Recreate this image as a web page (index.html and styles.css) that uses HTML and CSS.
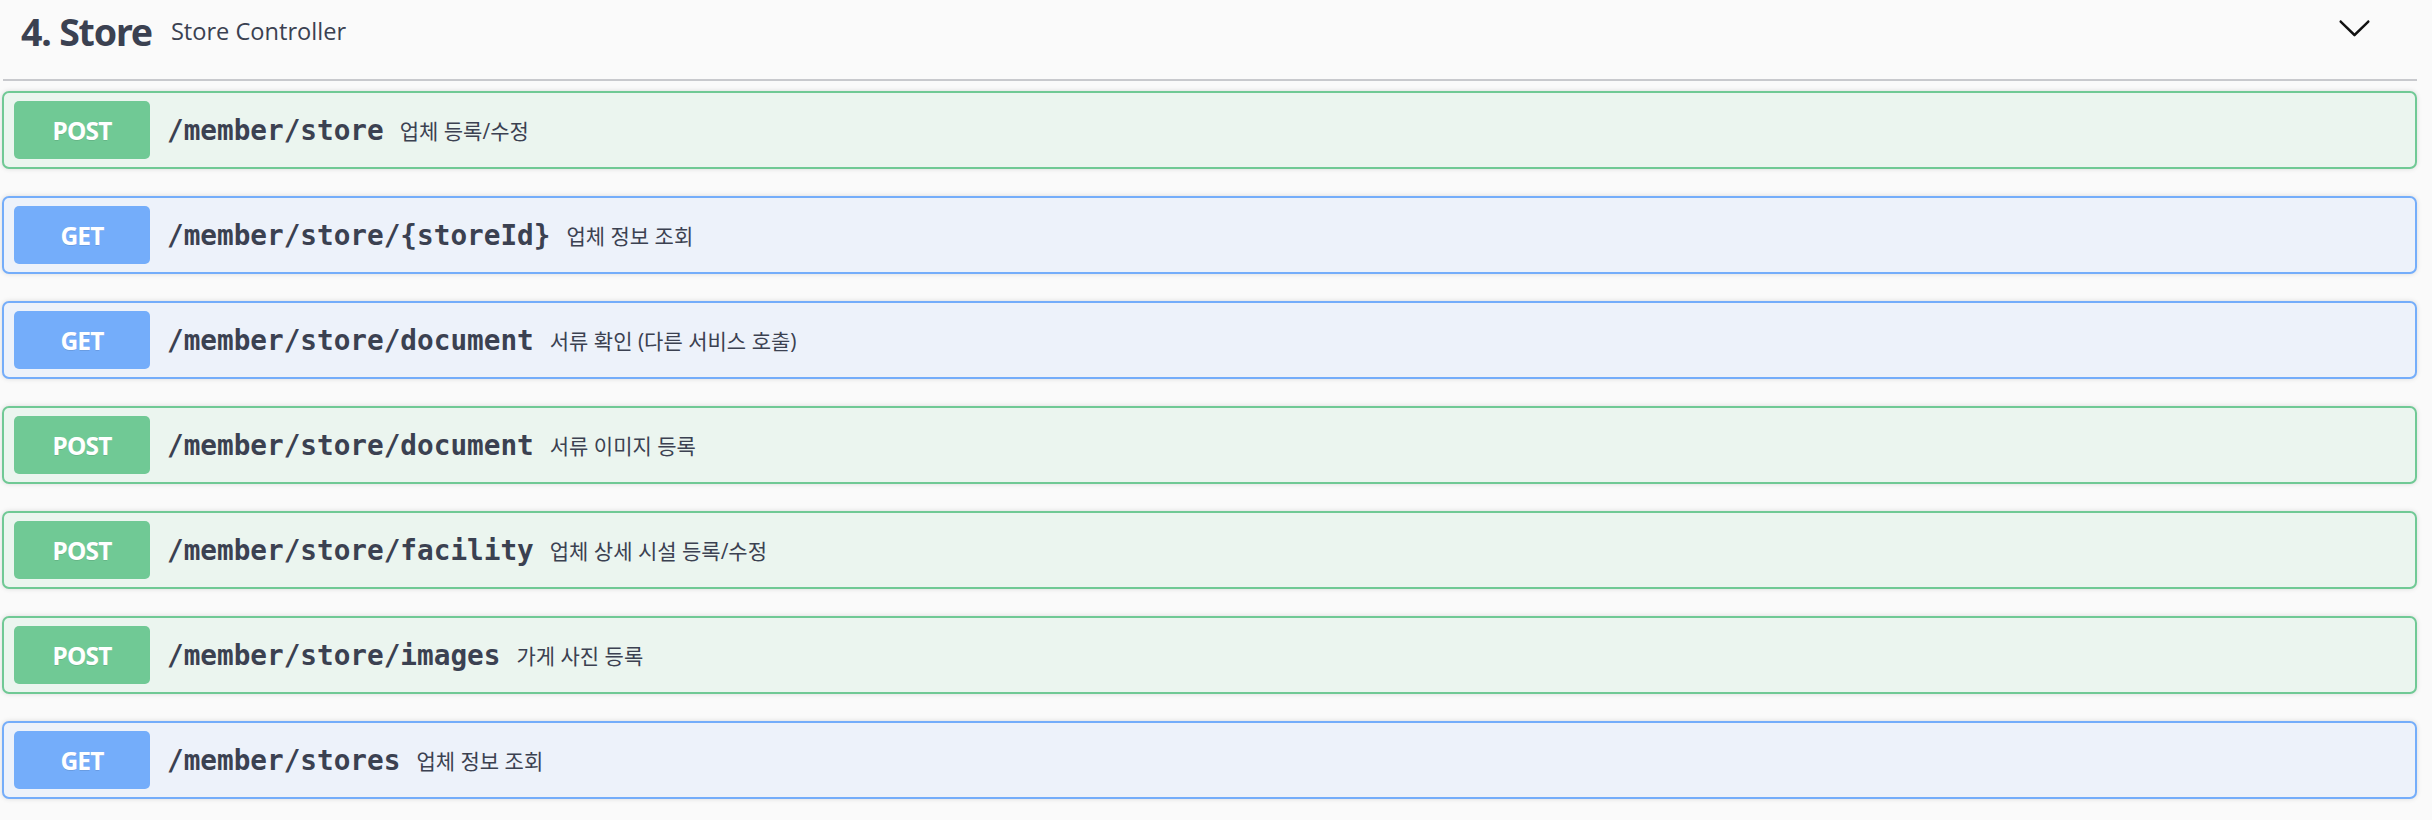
FILE: index.html
```html
<!DOCTYPE html>
<html lang="ko">
<head>
<meta charset="utf-8">
<title>Store Controller</title>
<link rel="stylesheet" href="styles.css">
</head>
<body>
<div class="wrapper">
  <div class="tag">
    <h3 class="tag-title">4. Store</h3>
    <span class="tag-desc">Store Controller</span>
    <svg class="arrow" viewBox="0 0 20 20" width="35" height="35" aria-hidden="true"><path d="M17.418 6.109c.272-.268.709-.268.979 0s.271.701 0 .969l-7.908 7.830c-.27.268-.707.268-.979 0l-7.908-7.83c-.27-.268-.27-.701 0-.969.271-.268.709-.268.979 0L10 13.25l7.418-7.141z"/></svg>
  </div>
  <div class="ops">
    <div class="op post"><span class="method">POST</span><span class="path">/member/store</span><span class="desc">업체 등록/수정</span></div>
    <div class="op get"><span class="method">GET</span><span class="path">/member/store/{storeId}</span><span class="desc">업체 정보 조회</span></div>
    <div class="op get"><span class="method">GET</span><span class="path">/member/store/document</span><span class="desc">서류 확인 (다른 서비스 호출)</span></div>
    <div class="op post"><span class="method">POST</span><span class="path">/member/store/document</span><span class="desc">서류 이미지 등록</span></div>
    <div class="op post"><span class="method">POST</span><span class="path">/member/store/facility</span><span class="desc">업체 상세 시설 등록/수정</span></div>
    <div class="op post"><span class="method">POST</span><span class="path">/member/store/images</span><span class="desc">가게 사진 등록</span></div>
    <div class="op get"><span class="method">GET</span><span class="path">/member/stores</span><span class="desc">업체 정보 조회</span></div>
  </div>
</div>
</body>
</html>
```

FILE: styles.css
```css
html, body {
  margin: 0;
  padding: 0;
  background: #fafafa;
}

body {
  width: 2432px;
  height: 820px;
  overflow: hidden;
  color: #3b4151;
  font-family: "Open Sans", "Noto Sans CJK KR", sans-serif;
}

.wrapper {
  padding: 0 15px 0 2px;
}

.tag {
  display: flex;
  align-items: center;
  height: 62px;
  padding: 0 45px 17px 18px;
  border-bottom: 2px solid #c8c9cd;
  margin-left: 1px;
}

.tag-title {
  margin: 0;
  font-family: "Noto Sans", "Open Sans", sans-serif;
  font-weight: 700;
  font-size: 37.5px;
  letter-spacing: -1.2px;
  color: #3b4151;
}

.tag-desc {
  flex: 1;
  padding: 0 17px 0 19px;
  font-family: "Open Sans", sans-serif;
  font-size: 23.6px;
  color: #3b4151;
}

.arrow {
  align-self: flex-start;
  margin-top: 10px;
  fill: #111;
}

.ops {
  display: flex;
  flex-direction: column;
  gap: 27px;
  padding-top: 10px;
}

.op {
  display: flex;
  align-items: center;
  height: 58px;
  padding: 8px 9px 8px 10px;
  border: 2px solid;
  border-radius: 7px;
  box-shadow: 0 0 5px rgba(0, 0, 0, 0.13);
}

.op.post {
  background: #ebf5ef;
  border-color: #70c995;
}

.op.get {
  background: #edf2fa;
  border-color: #74adfa;
}

.method {
  display: flex;
  align-items: center;
  justify-content: center;
  width: 136px;
  height: 58px;
  border-radius: 5px;
  color: #fff;
  font-family: "Noto Sans", "Open Sans", sans-serif;
  font-weight: 700;
  font-size: 24.5px;
  letter-spacing: -0.8px;
  text-shadow: 0 1px 0 rgba(0, 0, 0, 0.1);
}

.post .method { background: #70c995; }
.get .method { background: #74adfa; }

.path {
  padding: 0 16px 0 17px;
  font-family: "DejaVu Sans Mono", "Liberation Mono", monospace;
  font-weight: 700;
  font-size: 27.7px;
  color: #3b4151;
}

.desc {
  font-family: "Open Sans", "Noto Sans CJK KR", sans-serif;
  font-size: 21px;
  color: #3b4151;
}
```
